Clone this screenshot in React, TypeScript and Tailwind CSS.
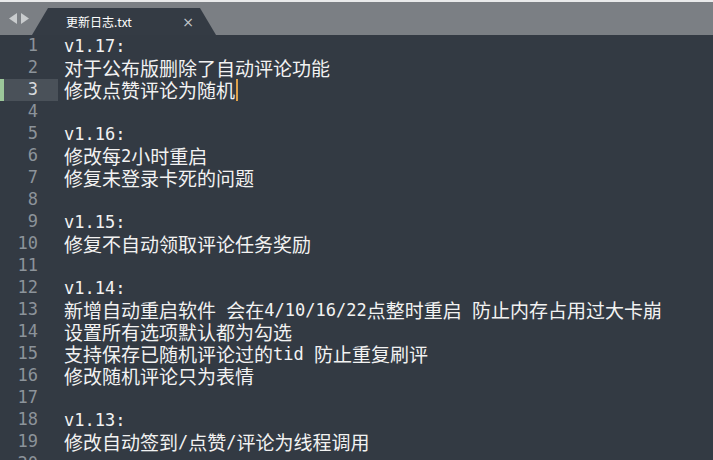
import React from "react";

const lines = [
  "v1.17:",
  "对于公布版删除了自动评论功能",
  "修改点赞评论为随机",
  "",
  "v1.16:",
  "修改每2小时重启",
  "修复未登录卡死的问题",
  "",
  "v1.15:",
  "修复不自动领取评论任务奖励",
  "",
  "v1.14:",
  "新增自动重启软件 会在4/10/16/22点整时重启 防止内存占用过大卡崩",
  "设置所有选项默认都为勾选",
  "支持保存已随机评论过的tid 防止重复刷评",
  "修改随机评论只为表情",
  "",
  "v1.13:",
  "修改自动签到/点赞/评论为线程调用",
  "",
];

// CJK runs get a wider size so they take ~two mono cells, like the editor does
function Segments({ text }: { text: string }) {
  const parts = text.match(/[\u3000-\u9fff\uff00-\uffef]+|[^\u3000-\u9fff\uff00-\uffef]+/g) ?? [];
  return (
    <>
      {parts.map((p, i) =>
        /[\u3000-\u9fff\uff00-\uffef]/.test(p) ? (
          <span key={i} className="text-[19px] leading-[22px] font-['Noto_Sans_CJK_SC',sans-serif]">
            {p}
          </span>
        ) : (
          <span key={i} className="whitespace-pre">{p}</span>
        )
      )}
    </>
  );
}

export default function App() {
  return (
    <div className="w-[713px] h-[460px] overflow-hidden bg-[#333a43] flex flex-col font-['DejaVu_Sans_Mono',monospace]">
      {/* tab bar */}
      <div className="h-[35px] shrink-0 bg-[#7b7f84] border-t-2 border-[#e9eaeb] flex items-end">
        <div className="w-[32px] h-full flex items-center pl-[9px] pb-[1px] gap-[4px]">
          <svg width="8" height="11" viewBox="0 0 8 11">
            <polygon points="8,0 8,11 0,5.5" fill="#c9ccce" />
          </svg>
          <svg width="8" height="11" viewBox="0 0 8 11">
            <polygon points="0,0 0,11 8,5.5" fill="#c9ccce" />
          </svg>
        </div>
        <div className="relative w-[184px] h-[27px] bg-[#343b44] [clip-path:polygon(16px_0,calc(100%-16px)_0,100%_100%,0_100%)] flex items-center pl-[34px] pr-[22px]">
          <span className="text-[12px] text-white font-['Noto_Sans_CJK_SC',sans-serif] leading-none">更新日志.txt</span>
          <span className="ml-auto text-[14px] text-[#c3c7cb] font-['DejaVu_Sans',sans-serif] leading-none">×</span>
        </div>
      </div>

      {/* editor */}
      <div className="flex-1">
        {lines.map((l, i) => {
          const current = i === 2;
          return (
            <div key={i} className="flex h-[22px] items-center">
              <div
                className={
                  "w-[58px] h-full shrink-0 flex items-center justify-end pr-[20px] text-[17px] " +
                  (current
                    ? "bg-[#4a5159] text-[#d7dadd] border-l-4 border-[#9cc79a]"
                    : "text-[#8c939a]")
                }
              >
                {i + 1}
              </div>
              <div className="pl-[6px] text-[17px] leading-[22px] text-[#f2f2f2] flex items-center whitespace-nowrap">
                <Segments text={l} />
                {current && <span className="inline-block w-[2px] h-[22px] bg-[#e0a24a] ml-[1px]" />}
              </div>
            </div>
          );
        })}
      </div>
    </div>
  );
}
